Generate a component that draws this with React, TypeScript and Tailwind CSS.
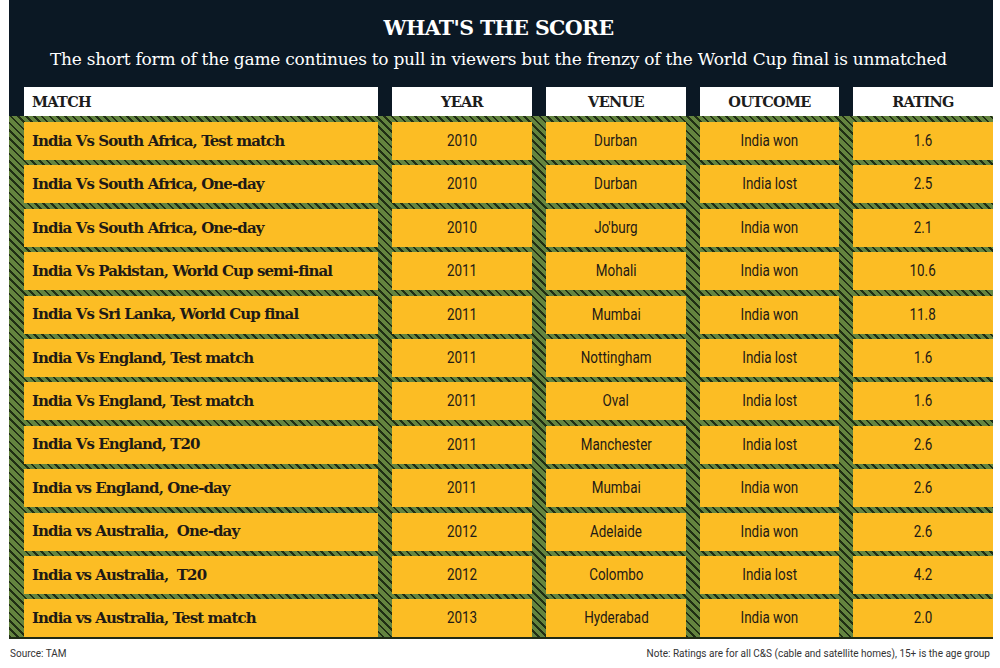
const rows = [
  { match: 'India Vs South Africa, Test match', year: '2010', venue: 'Durban', outcome: 'India won', rating: '1.6' },
  { match: 'India Vs South Africa, One-day', year: '2010', venue: 'Durban', outcome: 'India lost', rating: '2.5' },
  { match: 'India Vs South Africa, One-day', year: '2010', venue: "Jo'burg", outcome: 'India won', rating: '2.1' },
  { match: 'India Vs Pakistan, World Cup semi-final', year: '2011', venue: 'Mohali', outcome: 'India won', rating: '10.6' },
  { match: 'India Vs Sri Lanka, World Cup final', year: '2011', venue: 'Mumbai', outcome: 'India won', rating: '11.8' },
  { match: 'India Vs England, Test match', year: '2011', venue: 'Nottingham', outcome: 'India lost', rating: '1.6' },
  { match: 'India Vs England, Test match', year: '2011', venue: 'Oval', outcome: 'India lost', rating: '1.6' },
  { match: 'India Vs England, T20', year: '2011', venue: 'Manchester', outcome: 'India lost', rating: '2.6' },
  { match: 'India vs England, One-day', year: '2011', venue: 'Mumbai', outcome: 'India won', rating: '2.6' },
  { match: 'India vs Australia,  One-day', year: '2012', venue: 'Adelaide', outcome: 'India won', rating: '2.6' },
  { match: 'India vs Australia,  T20', year: '2012', venue: 'Colombo', outcome: 'India lost', rating: '4.2' },
  { match: 'India vs Australia, Test match', year: '2013', venue: 'Hyderabad', outcome: 'India won', rating: '2.0' },
];

const slab = "font-['DejaVu_Serif',serif]";
const cond = "font-['Roboto',sans-serif]";

// narrow sans look: Roboto squeezed horizontally
const Narrow = ({ children }: { children: string }) => (
  <span className="inline-block scale-x-[0.84] whitespace-nowrap">{children}</span>
);

const App = () => {
  return (
    <div className="w-[1000px] h-[668px] bg-white overflow-hidden">
      <div className="ml-[9px] w-[984px]">
        {/* Title block */}
        <div className="bg-[#0b1824]">
          <div className="h-[87px] flex flex-col items-center text-white pr-[5px]">
            <h1 className={`${slab} font-bold text-[20.5px] leading-none mt-[18px] tracking-[-0.6px]`}>
              WHAT'S THE SCORE
            </h1>
            <p className={`${slab} text-[17px] leading-none mt-[12px] tracking-[-0.25px]`}>
              The short form of the game continues to pull in viewers but the frenzy of the World Cup final is unmatched
            </p>
          </div>
          <div className={`grid grid-cols-[354px_140px_140px_139px_140px] gap-x-[14px] h-[29px] pl-[15px] ${slab} font-bold text-[14.5px] text-[#1c1c1c]`}>
            <div className="bg-white flex items-center pl-[8px] tracking-[-0.7px]">MATCH</div>
            <div className="bg-white flex items-center justify-center tracking-[-0.7px]">YEAR</div>
            <div className="bg-white flex items-center justify-center tracking-[-0.7px]">VENUE</div>
            <div className="bg-white flex items-center justify-center tracking-[-0.7px]">OUTCOME</div>
            <div className="bg-white flex items-center justify-center tracking-[-0.7px]">RATING</div>
          </div>
        </div>

        {/* Table body on hatched green */}
        <div className="bg-[repeating-linear-gradient(45deg,#202e14_0px,#202e14_1.8px,#64843f_1.8px,#64843f_5.5px)] pl-[15px] pt-[6px] border-b-2 border-[#1f2a16]">
          <div className="grid grid-cols-[354px_140px_140px_139px_140px] gap-x-[14px] gap-y-[5.4px] auto-rows-[38px] text-[#1e1a16]">
            {rows.map((r, i) => (
              <div key={i} className="contents">
                <div className={`bg-[#fcbd24] flex items-center pl-[8px] ${slab} font-bold text-[15px] tracking-[-0.9px] whitespace-pre`}>
                  {r.match}
                </div>
                <div className={`bg-[#fcbd24] flex items-center justify-center ${cond} text-[16px]`}><Narrow>{r.year}</Narrow></div>
                <div className={`bg-[#fcbd24] flex items-center justify-center ${cond} text-[16px]`}><Narrow>{r.venue}</Narrow></div>
                <div className={`bg-[#fcbd24] flex items-center justify-center ${cond} text-[16px]`}><Narrow>{r.outcome}</Narrow></div>
                <div className={`bg-[#fcbd24] flex items-center justify-center ${cond} text-[16px]`}><Narrow>{r.rating}</Narrow></div>
              </div>
            ))}
          </div>
        </div>
      </div>

      {/* Footer notes */}
      <div className={`flex justify-between pl-[10px] pr-[10px] mt-[7px] ${cond} text-[10px] text-[#333]`}>
        <span>Source: TAM</span>
        <span>Note: Ratings are for all C&amp;S (cable and satellite homes), 15+ is the age group</span>
      </div>
    </div>
  );
};

export default App;
